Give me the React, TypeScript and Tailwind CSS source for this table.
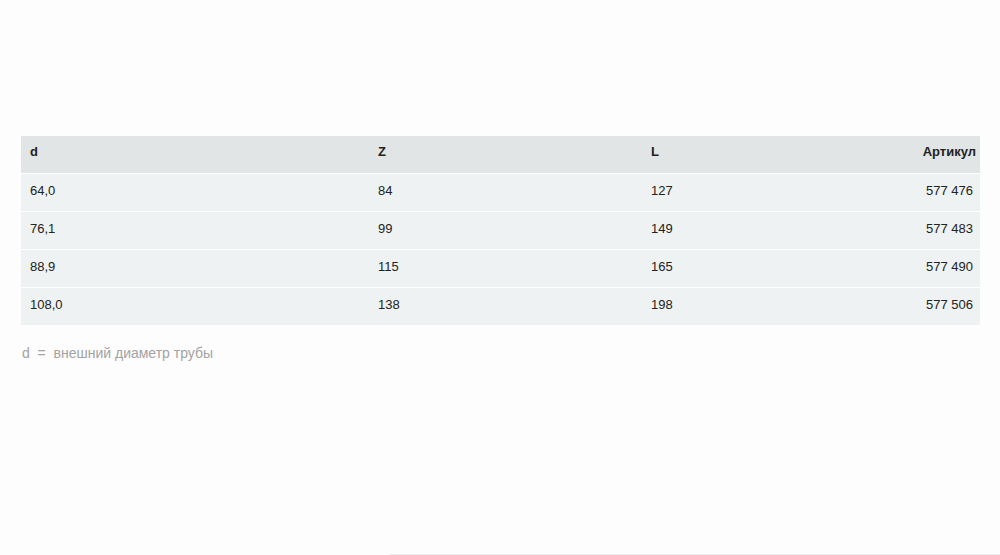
const rows = [
    ['64,0', '84', '127', '577 476'],
    ['76,1', '99', '149', '577 483'],
    ['88,9', '115', '165', '577 490'],
    ['108,0', '138', '198', '577 506'],
];

const cols = 'grid grid-cols-[348px_273px_1fr_auto] items-center';

export default function App() {
    return (
        <div className="w-[1000px] h-[555px] bg-[#fdfdfd] relative font-['Liberation_Sans',Arial,sans-serif] text-[13px] text-[#222]">
            <div className="pt-[136px] pl-[21px] pr-[20px]">
                <div className={`${cols} h-[37px] pb-[5px] bg-[#e1e5e5] font-bold`}>
                    <div className="pl-[9px]">d</div>
                    <div className="pl-[9px]">Z</div>
                    <div className="pl-[9px]">L</div>
                    <div className="pr-[4px] text-right">Артикул</div>
                </div>
                {rows.map((r) => (
                    <div key={r[3]} className={`${cols} h-[38px] pb-[4px] border-t border-white bg-[#eef2f2]`}>
                        <div className="pl-[9px]">{r[0]}</div>
                        <div className="pl-[9px]">{r[1]}</div>
                        <div className="pl-[9px]">{r[2]}</div>
                        <div className="pr-[7px] text-right">{r[3]}</div>
                    </div>
                ))}
                <p className="mt-[18px] pl-[1px] text-[14px] text-[#a3a3a3]">d&nbsp; =&nbsp; внешний диаметр трубы</p>
            </div>
            <div className="absolute left-[390px] right-0 bottom-0 h-px bg-[#ececec]" />
        </div>
    );
}
